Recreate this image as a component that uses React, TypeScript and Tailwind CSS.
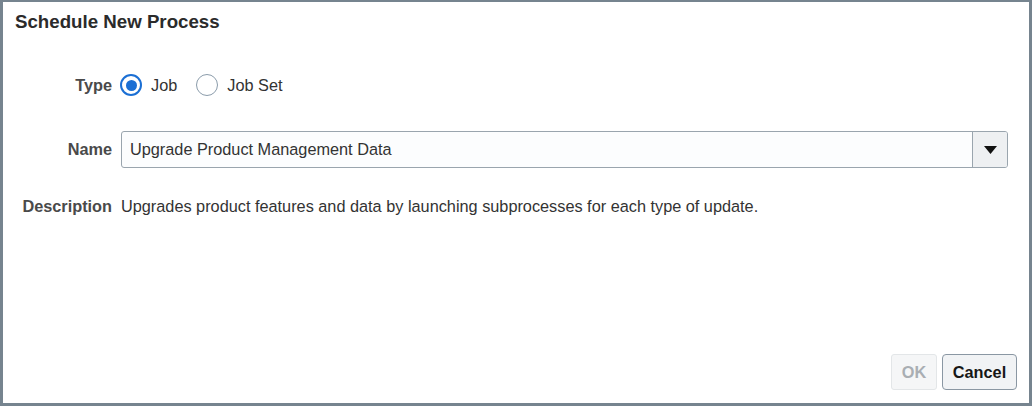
import React, { useState } from "react";

type JobType = "job" | "jobset";

function Radio({
  checked,
  label,
  onClick,
}: {
  checked: boolean;
  label: string;
  onClick: () => void;
}) {
  return (
    <button type="button" onClick={onClick} className="flex items-center gap-[9px]">
      {checked ? (
        <span className="flex h-[22px] w-[22px] items-center justify-center rounded-full border-[2.5px] border-[#1b6fd4] bg-white">
          <span className="h-[11px] w-[11px] rounded-full bg-[#1b6fd4]" />
        </span>
      ) : (
        <span className="h-[22px] w-[22px] rounded-full border-[1.5px] border-[#8b9cab] bg-white" />
      )}
      <span className="text-[16.3px] text-[#333]">{label}</span>
    </button>
  );
}

export default function App() {
  const [type, setType] = useState<JobType>("job");

  return (
    <div
      className="flex h-[406px] w-[1032px] flex-col border-[3px] border-t-2 border-[#76848f] bg-white text-[#333]"
      style={{ fontFamily: '"Liberation Sans", Arial, sans-serif' }}
    >
      {/* Header */}
      <div className="flex h-[41px] items-center pl-[12px]">
        <h1 className="text-[18.7px] font-bold text-[#2b2b2b]">Schedule New Process</h1>
      </div>

      {/* Form */}
      <div className="mt-[27px] flex flex-col pr-[21px]">
        <div className="flex h-[30px] items-center">
          <div className="w-[109px] text-right text-[16.3px] font-bold text-[#4a4a4a]">Type</div>
          <div className="ml-[8px] flex items-center gap-[19px]">
            <Radio checked={type === "job"} label="Job" onClick={() => setType("job")} />
            <Radio checked={type === "jobset"} label="Job Set" onClick={() => setType("jobset")} />
          </div>
        </div>

        <div className="mt-[31px] flex h-[37px] items-center">
          <div className="w-[109px] text-right text-[16.3px] font-bold text-[#4a4a4a]">Name</div>
          <div className="ml-[9px] flex h-[37px] flex-1 overflow-hidden rounded-[3px] border border-[#9aa5ae] bg-[#fcfdfe]">
            <div className="flex flex-1 items-center px-[8px] text-[16.3px] text-[#333]">
              Upgrade Product Management Data
            </div>
            <div className="flex w-[35px] items-center justify-center border-l border-[#9aa5ae] bg-[#eef0f2]">
              <svg width="13" height="8" viewBox="0 0 13 8">
                <path d="M0 0 L13 0 L6.5 8 Z" fill="#111" />
              </svg>
            </div>
          </div>
        </div>

        <div className="mt-[26px] flex h-[24px] items-center">
          <div className="w-[109px] text-right text-[16.3px] font-bold text-[#4a4a4a]">Description</div>
          <div className="ml-[9px] text-[16.3px] text-[#333]">
            Upgrades product features and data by launching subprocesses for each type of update.
          </div>
        </div>
      </div>

      <div className="flex-1" />

      {/* Footer */}
      <div className="flex justify-end gap-[5px] pb-[13px] pr-[12px]">
        <button
          type="button"
          disabled
          className="h-[36px] w-[46px] rounded-[3px] border border-[#e3e6e8] bg-[#f5f6f7] text-[16.3px] font-bold text-[#a9aeb3]"
        >
          OK
        </button>
        <button
          type="button"
          className="h-[36px] w-[75px] rounded-[4px] border border-[#8a97a3] bg-[#f1f3f5] text-[16.3px] font-bold text-[#161616]"
        >
          Cancel
        </button>
      </div>
    </div>
  );
}
